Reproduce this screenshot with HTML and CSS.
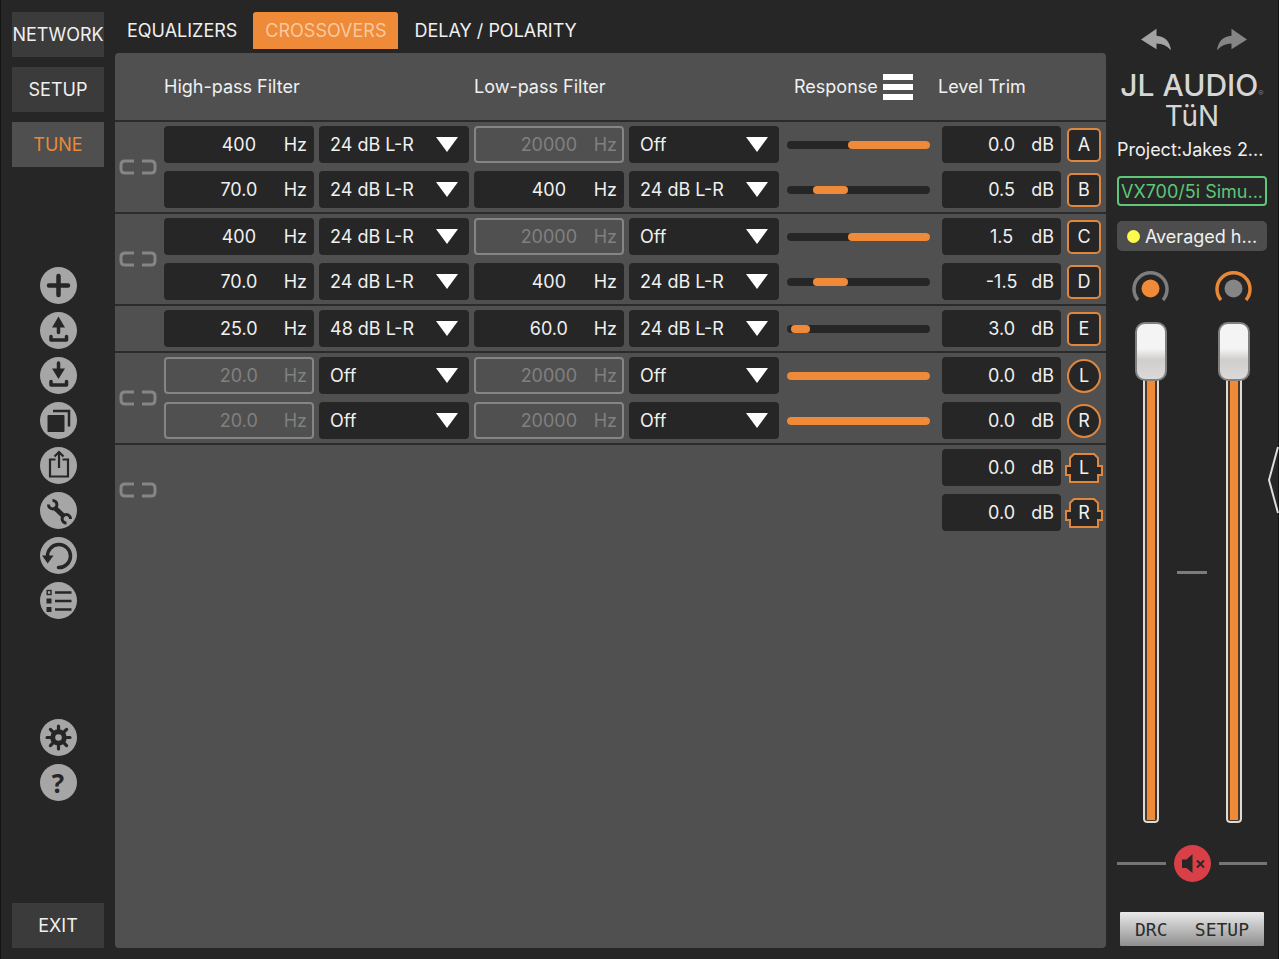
FILE: index.html
```html
<!DOCTYPE html>
<html lang="en">
<head>
    <meta charset="UTF-8">
    <meta name="viewport" content="width=device-width, initial-scale=1.0">
    <title>JL Audio TüN - Crossovers</title>
    <link rel="stylesheet" href="styles.css">
</head>
<body>
<svg class="defs" width="0" height="0" aria-hidden="true">
    <symbol id="link" viewBox="0 0 38 16">
        <path d="M15 2H6Q2 2 2 6V10Q2 14 6 14H15M23 2H32Q36 2 36 6V10Q36 14 32 14H23" fill="none" stroke="currentColor" stroke-width="3"/>
    </symbol>
    <symbol id="amp" viewBox="0 0 38 30">
        <path d="M9 1H29L33 5V13H37V22H33V29H5V22H1V13H5V5Z" fill="#262626" stroke="#e0873f" stroke-width="2"/>
    </symbol>
</svg>

<div class="app">
    <aside class="sidebar">
        <nav class="menu">
            <button type="button">NETWORK</button>
            <button type="button">SETUP</button>
            <button type="button" class="active">TUNE</button>
        </nav>

        <div class="tools">
            <button type="button" aria-label="Add">
                <svg viewBox="0 0 37 37"><path d="M18.500 9V28M9 18.500H28" fill="none" stroke="currentColor" stroke-width="4.500" stroke-linecap="round"/></svg>
            </button>
            <button type="button" aria-label="Upload">
                <svg viewBox="0 0 37 37"><path d="M18.500 4.500L25 15.500H12Z" fill="currentColor"/><path d="M18.500 13V20.500M11 24.500V28H26.500V24.500" fill="none" stroke="currentColor" stroke-width="3.500" stroke-linecap="round" stroke-linejoin="round"/></svg>
            </button>
            <button type="button" aria-label="Download">
                <svg viewBox="0 0 37 37"><path d="M18.500 22L25 11.500H12Z" fill="currentColor"/><path d="M18.500 6V13M11 24.500V28H26.500V24.500" fill="none" stroke="currentColor" stroke-width="3.500" stroke-linecap="round" stroke-linejoin="round"/></svg>
            </button>
            <button type="button" aria-label="Copy">
                <svg viewBox="0 0 37 37"><rect x="7.500" y="13" width="17" height="17" rx="1" fill="currentColor"/><path d="M13 9H29V24.500" fill="none" stroke="currentColor" stroke-width="2.500"/></svg>
            </button>
            <button type="button" aria-label="Share">
                <svg viewBox="0 0 37 37"><path d="M15.500 12.500H10V29.500H28V12.500H22.500M19 21V5.500M14.500 9.500L19 5L23.500 9.500" fill="none" stroke="currentColor" stroke-width="2.200"/></svg>
            </button>
            <button type="button" aria-label="Tools">
                <svg viewBox="0 0 37 37"><path d="M15.500 16.500L23.500 24" fill="none" stroke="currentColor" stroke-width="5"/><path d="M8.500 12.500A4.200 4.200 0 1 0 12.500 8.500M30.500 27A4.200 4.200 0 1 0 26.500 31" fill="none" stroke="currentColor" stroke-width="3"/></svg>
            </button>
            <button type="button" aria-label="Revert">
                <svg viewBox="0 0 37 37"><path d="M18.500 30.500A11.500 11.500 0 1 0 7.500 19.500" fill="none" stroke="currentColor" stroke-width="3.500" stroke-linecap="round"/><path d="M2 18.500H13.500L7.700 26.500Z" fill="currentColor"/></svg>
            </button>
            <button type="button" aria-label="List">
                <svg viewBox="0 0 37 37"><path d="M15 10.500H31.500M15 19H31.500M15 27.500H31.500" stroke="currentColor" stroke-width="2.400"/><rect x="7.200" y="8.500" width="3.800" height="4" fill="none" stroke="currentColor" stroke-width="1.400"/><rect x="6.500" y="16.500" width="5" height="5" fill="currentColor"/><rect x="6.500" y="25" width="5" height="5" fill="currentColor"/></svg>
            </button>
        </div>

        <div class="tools">
            <button type="button" aria-label="Settings">
                <svg viewBox="0 0 37 37">
                    <circle cx="18.500" cy="18.500" r="5.800" fill="none" stroke="currentColor" stroke-width="5"/>
                    <path d="M18.500 7V10M18.500 27V30M7 18.500H10M27 18.500H30M10.400 10.400L12.500 12.500M24.500 24.500L26.600 26.600M10.400 26.600L12.500 24.500M24.500 12.500L26.600 10.400" stroke="currentColor" stroke-width="3.200" stroke-linecap="round"/>
                </svg>
            </button>
            <button type="button" class="help" aria-label="Help">?</button>
        </div>

        <button type="button" class="exit">EXIT</button>
    </aside>

    <main class="main">
        <nav class="tabs">
            <button type="button">EQUALIZERS</button>
            <button type="button" class="active">CROSSOVERS</button>
            <button type="button">DELAY / POLARITY</button>
        </nav>

        <div class="panel">
            <div class="head">
                <span>High-pass Filter</span>
                <span>Low-pass Filter</span>
                <span class="response-head">Response
                    <button type="button" class="bars" aria-label="Response menu"><i></i><i></i><i></i></button>
                </span>
                <span>Level Trim</span>
            </div>

            <section class="group">
                <button type="button" class="link" aria-label="Link A and B"><svg><use href="#link"/></svg></button>
                <div class="rows">
                    <div class="row">
                        <label class="field"><input type="text" value="400" aria-label="A high-pass frequency"><span>Hz</span></label>
                        <div class="select"><select aria-label="A high-pass slope"><option>24 dB L-R</option><option>48 dB L-R</option><option>Off</option></select></div>
                        <label class="field disabled"><input type="text" value="20000" disabled aria-label="A low-pass frequency"><span>Hz</span></label>
                        <div class="select"><select aria-label="A low-pass slope"><option>Off</option><option>24 dB L-R</option><option>48 dB L-R</option></select></div>
                        <div class="response"><div class="band" style="margin-left: 43%; width: 57%"></div></div>
                        <label class="field level"><input type="text" value="0.0" aria-label="A level trim"><span>dB</span></label>
                        <div class="badge">A</div>
                    </div>
                    <div class="row">
                        <label class="field"><input type="text" value="70.0" aria-label="B high-pass frequency"><span>Hz</span></label>
                        <div class="select"><select aria-label="B high-pass slope"><option>24 dB L-R</option><option>48 dB L-R</option><option>Off</option></select></div>
                        <label class="field"><input type="text" value="400" aria-label="B low-pass frequency"><span>Hz</span></label>
                        <div class="select"><select aria-label="B low-pass slope"><option>24 dB L-R</option><option>48 dB L-R</option><option>Off</option></select></div>
                        <div class="response"><div class="band" style="margin-left: 18%; width: 25%"></div></div>
                        <label class="field level"><input type="text" value="0.5" aria-label="B level trim"><span>dB</span></label>
                        <div class="badge">B</div>
                    </div>
                </div>
            </section>

            <section class="group">
                <button type="button" class="link" aria-label="Link C and D"><svg><use href="#link"/></svg></button>
                <div class="rows">
                    <div class="row">
                        <label class="field"><input type="text" value="400" aria-label="C high-pass frequency"><span>Hz</span></label>
                        <div class="select"><select aria-label="C high-pass slope"><option>24 dB L-R</option><option>48 dB L-R</option><option>Off</option></select></div>
                        <label class="field disabled"><input type="text" value="20000" disabled aria-label="C low-pass frequency"><span>Hz</span></label>
                        <div class="select"><select aria-label="C low-pass slope"><option>Off</option><option>24 dB L-R</option><option>48 dB L-R</option></select></div>
                        <div class="response"><div class="band" style="margin-left: 43%; width: 57%"></div></div>
                        <label class="field level"><input type="text" value="1.5" aria-label="C level trim"><span>dB</span></label>
                        <div class="badge">C</div>
                    </div>
                    <div class="row">
                        <label class="field"><input type="text" value="70.0" aria-label="D high-pass frequency"><span>Hz</span></label>
                        <div class="select"><select aria-label="D high-pass slope"><option>24 dB L-R</option><option>48 dB L-R</option><option>Off</option></select></div>
                        <label class="field"><input type="text" value="400" aria-label="D low-pass frequency"><span>Hz</span></label>
                        <div class="select"><select aria-label="D low-pass slope"><option>24 dB L-R</option><option>48 dB L-R</option><option>Off</option></select></div>
                        <div class="response"><div class="band" style="margin-left: 18%; width: 25%"></div></div>
                        <label class="field level"><input type="text" value="-1.5" aria-label="D level trim"><span>dB</span></label>
                        <div class="badge">D</div>
                    </div>
                </div>
            </section>

            <section class="group">
                <div class="link"></div>
                <div class="rows">
                    <div class="row">
                        <label class="field"><input type="text" value="25.0" aria-label="E high-pass frequency"><span>Hz</span></label>
                        <div class="select"><select aria-label="E high-pass slope"><option>48 dB L-R</option><option>24 dB L-R</option><option>Off</option></select></div>
                        <label class="field"><input type="text" value="60.0" aria-label="E low-pass frequency"><span>Hz</span></label>
                        <div class="select"><select aria-label="E low-pass slope"><option>24 dB L-R</option><option>48 dB L-R</option><option>Off</option></select></div>
                        <div class="response"><div class="band" style="margin-left: 3%; width: 13%"></div></div>
                        <label class="field level"><input type="text" value="3.0" aria-label="E level trim"><span>dB</span></label>
                        <div class="badge">E</div>
                    </div>
                </div>
            </section>

            <section class="group">
                <button type="button" class="link" aria-label="Link left and right"><svg><use href="#link"/></svg></button>
                <div class="rows">
                    <div class="row">
                        <label class="field disabled"><input type="text" value="20.0" disabled aria-label="L high-pass frequency"><span>Hz</span></label>
                        <div class="select"><select aria-label="L high-pass slope"><option>Off</option><option>24 dB L-R</option><option>48 dB L-R</option></select></div>
                        <label class="field disabled"><input type="text" value="20000" disabled aria-label="L low-pass frequency"><span>Hz</span></label>
                        <div class="select"><select aria-label="L low-pass slope"><option>Off</option><option>24 dB L-R</option><option>48 dB L-R</option></select></div>
                        <div class="response"><div class="band" style="margin-left: 0%; width: 100%"></div></div>
                        <label class="field level"><input type="text" value="0.0" aria-label="L level trim"><span>dB</span></label>
                        <div class="badge round">L</div>
                    </div>
                    <div class="row">
                        <label class="field disabled"><input type="text" value="20.0" disabled aria-label="R high-pass frequency"><span>Hz</span></label>
                        <div class="select"><select aria-label="R high-pass slope"><option>Off</option><option>24 dB L-R</option><option>48 dB L-R</option></select></div>
                        <label class="field disabled"><input type="text" value="20000" disabled aria-label="R low-pass frequency"><span>Hz</span></label>
                        <div class="select"><select aria-label="R low-pass slope"><option>Off</option><option>24 dB L-R</option><option>48 dB L-R</option></select></div>
                        <div class="response"><div class="band" style="margin-left: 0%; width: 100%"></div></div>
                        <label class="field level"><input type="text" value="0.0" aria-label="R level trim"><span>dB</span></label>
                        <div class="badge round">R</div>
                    </div>
                </div>
            </section>

            <section class="group">
                <button type="button" class="link" aria-label="Link outputs"><svg><use href="#link"/></svg></button>
                <div class="rows">
                    <div class="row">
                        <label class="field level"><input type="text" value="0.0" aria-label="Output L level trim"><span>dB</span></label>
                        <div class="badge amp"><svg><use href="#amp"/></svg><span>L</span></div>
                    </div>
                    <div class="row">
                        <label class="field level"><input type="text" value="0.0" aria-label="Output R level trim"><span>dB</span></label>
                        <div class="badge amp"><svg><use href="#amp"/></svg><span>R</span></div>
                    </div>
                </div>
            </section>
        </div>
    </main>

    <aside class="master">
        <div class="history">
            <button type="button" aria-label="Undo">
                <svg viewBox="0 0 32 24"><path d="M0 12L16 1V8Q29 9 31 23Q25 16 16 16V22Z" fill="#a3a3a3"/></svg>
            </button>
            <button type="button" aria-label="Redo">
                <svg viewBox="0 0 32 24"><path d="M32 12L16 1V8Q3 9 1 23Q7 16 16 16V22Z" fill="#858585"/></svg>
            </button>
        </div>

        <div class="logo">
            <div class="brand">JL AUDIO<small>®</small></div>
            <div class="product">TüN</div>
        </div>

        <div class="project">Project:Jakes 2...</div>
        <button type="button" class="device">VX700/5i Simu...</button>
        <button type="button" class="preset"><i></i>Averaged h...</button>

        <div class="faders">
            <button type="button" class="knob" aria-label="Master level">
                <svg viewBox="0 0 37 32"><path d="M6 30A16.500 16.500 0 1 1 31 30" fill="none" stroke="#7e7e7e" stroke-width="3.500"/><circle cx="18.500" cy="18.500" r="9" fill="#ee8a38"/></svg>
            </button>
            <span></span>
            <button type="button" class="knob" aria-label="Subwoofer level">
                <svg viewBox="0 0 37 32"><path d="M6 30A16.500 16.500 0 1 1 31 30" fill="none" stroke="#e88736" stroke-width="3.500"/><circle cx="18.500" cy="18.500" r="9" fill="#858585"/></svg>
            </button>
            <input type="range" class="fader" min="0" max="100" value="100" aria-label="Master volume">
            <span class="dash"></span>
            <input type="range" class="fader" min="0" max="100" value="100" aria-label="Subwoofer volume">
        </div>

        <div class="mute-row">
            <button type="button" class="mute" aria-label="Mute">
                <svg viewBox="0 0 37 37"><path d="M8 14.500H12.500L18.500 9V28L12.500 23H8Z" fill="currentColor"/><path d="M23 15.500L30 22.500M30 15.500L23 22.500" stroke="currentColor" stroke-width="1.800"/></svg>
            </button>
        </div>

        <button type="button" class="drc"><span>DRC</span><span>SETUP</span></button>
    </aside>

    <button type="button" class="drawer" aria-label="Open drawer">
        <svg viewBox="0 0 12 68"><path d="M11 1L2 34L11 67" fill="none" stroke="#dcdcdc" stroke-width="2"/></svg>
    </button>
</div>
</body>
</html>
```
FILE: styles.css
```css
* {
    box-sizing: border-box;
}
body {
    margin: 0;
    background: #262626;
    color: #f0f0f0;
    font-family: Inter, "Liberation Sans", sans-serif;
    font-size: 18px;
}
button, input, select {
    margin: 0;
    padding: 0;
    border: none;
    background: none;
    color: inherit;
    font: inherit;
}
button {
    cursor: pointer;
    white-space: nowrap;
}
svg {
    display: block;
}
.defs {
    position: absolute;
}
.app {
    position: relative;
    display: grid;
    grid-template-columns: 92px 1fr 150px;
    gap: 11px;
    min-height: 100vh;
    padding: 12px 11px 11px;
    border: solid #141414;
    border-width: 0 1px;
}

/* left sidebar */
.sidebar {
    display: flex;
    flex-direction: column;
    align-items: center;
    gap: 100px;
}
.menu {
    display: flex;
    flex-direction: column;
    gap: 10px;
    width: 100%;
}
.menu button, .exit {
    width: 100%;
    height: 45px;
    background: #3b3b3b;
}
.menu .active {
    background: #4f4f4f;
    color: #ea8838;
}
.tools {
    display: flex;
    flex-direction: column;
    gap: 8px;
}
.tools button {
    width: 37px;
    height: 37px;
    border-radius: 50%;
    background: #a6a6a6;
    color: #262626;
}
.tools .help {
    font: bold 26px "Open Sans", sans-serif;
}
.exit {
    margin-top: auto;
}

/* tabs and panel */
.main {
    display: flex;
    flex-direction: column;
    gap: 4px;
    min-width: 0;
}
.tabs {
    display: flex;
    gap: 4px;
}
.tabs button {
    height: 37px;
    padding: 0 12px;
    border-radius: 3px 3px 0 0;
}
.tabs .active {
    background: #ee8a38;
    color: #f8c9a0;
}
.panel {
    flex: 1;
    border-radius: 4px;
    background: #505050;
}
.head {
    display: grid;
    grid-template-columns: 305fr 305fr 149fr 164fr;
    gap: 5px;
    align-items: center;
    height: 69px;
    padding: 0 4px 0 49px;
    border-bottom: 2px solid #2b2b2b;
}
.response-head {
    display: flex;
    align-items: center;
    gap: 5px;
    padding-left: 10px;
}
.bars {
    display: grid;
    gap: 4px;
    width: 30px;
}
.bars i {
    height: 6px;
    background: #fff;
}

/* channel groups */
.group {
    display: flex;
    padding: 4px 4px 4px 0;
    border-bottom: 2px solid #2b2b2b;
}
.group:last-child {
    border-bottom: none;
}
.link {
    display: grid;
    place-items: center;
    width: 45px;
    margin-right: 4px;
    color: #868686;
}
.link svg {
    width: 38px;
    height: 16px;
}
.rows {
    flex: 1;
    display: grid;
    gap: 8px;
}
.row {
    display: grid;
    grid-template-columns: repeat(4, 150fr) 153fr 119fr 36px;
    gap: 5px;
    align-items: center;
    height: 37px;
}
.field {
    display: flex;
    align-items: center;
    height: 37px;
    padding: 0 7px 0 30px;
    border-radius: 4px;
    background: #262626;
}
.field input {
    flex: 1;
    width: 0;
    min-width: 0;
    text-align: center;
}
.field.level {
    grid-column: 6;
}
.field.disabled {
    padding: 0 5px 0 28px;
    border: 2px solid #858585;
    background: none;
    color: #808080;
}
.select {
    display: grid;
    align-items: center;
    height: 37px;
    border-radius: 4px;
    background: #262626;
}
.select select {
    grid-area: 1 / 1;
    height: 37px;
    padding-left: 11px;
    appearance: none;
}
.select option {
    background: #262626;
}
.select::after {
    content: "";
    grid-area: 1 / 1;
    justify-self: end;
    width: 22px;
    height: 15px;
    margin-right: 11px;
    background: #fff;
    clip-path: polygon(0 0, 100% 0, 50% 100%);
    pointer-events: none;
}
.response {
    height: 8px;
    margin: 0 7px 0 3px;
    border-radius: 4px;
    background: #262626;
}
.band {
    height: 8px;
    border-radius: 4px;
    background: #ee8a38;
}
.badge {
    grid-column: 7;
    display: grid;
    place-items: center;
    justify-self: center;
    width: 34px;
    height: 34px;
    border: 2px solid #e0873f;
    border-radius: 5px;
    background: #262626;
}
.badge.round {
    border-radius: 50%;
}
.badge.amp {
    width: 38px;
    border: none;
    background: none;
}
.amp svg, .amp span {
    grid-area: 1 / 1;
}
.amp svg {
    width: 38px;
    height: 30px;
}

/* master section */
.master {
    display: flex;
    flex-direction: column;
    padding: 15px 0 2px;
}
.history {
    display: flex;
    justify-content: space-between;
    padding: 0 20px 0 24px;
}
.history svg {
    width: 31px;
    height: 25px;
}
.logo {
    margin-top: 18px;
    color: #d6d6d6;
    text-align: center;
    white-space: nowrap;
}
.brand {
    display: flex;
    align-items: flex-end;
    justify-content: center;
    font-size: 30px;
    font-weight: 500;
    line-height: 30px;
}
.brand small {
    color: #777;
    font-size: 8px;
    line-height: 14px;
}
.product {
    font-size: 28px;
    line-height: 32px;
}
.project {
    margin-top: 6px;
    line-height: 24px;
    white-space: nowrap;
}
.device {
    height: 30px;
    margin-top: 14px;
    border: 2px solid #5cc878;
    border-radius: 4px;
    color: #5cc878;
}
.preset {
    display: flex;
    align-items: center;
    justify-content: center;
    gap: 5px;
    height: 30px;
    margin-top: 15px;
    border-radius: 5px;
    background: #4d4d4d;
}
.preset i {
    width: 13px;
    height: 13px;
    border-radius: 50%;
    background: #fdfb4b;
}
.faders {
    flex: 1;
    display: grid;
    grid-template-columns: 37px 1fr 37px;
    grid-template-rows: 32px 1fr;
    gap: 20px 0;
    place-items: center;
    margin-top: 19px;
    padding: 0 15px;
}
.knob svg {
    width: 37px;
    height: 32px;
}
.fader {
    writing-mode: vertical-lr;
    direction: rtl;
    appearance: none;
    width: 32px;
    height: 100%;
}
.fader::-webkit-slider-runnable-track {
    width: 16px;
    height: 100%;
    border-radius: 4px;
    background: linear-gradient(#ee8a38, #ee8a38) center / 8px calc(100% - 6px) no-repeat #4a3a2c;
    box-shadow: inset 0 0 0 2px #dedad6;
}
.fader::-webkit-slider-thumb {
    appearance: none;
    width: 32px;
    height: 59px;
    margin-left: -8px;
    border: 2px solid #808080;
    border-radius: 10px;
    background: linear-gradient(#f4f4f4 45%, #cfcecd 65%, #dcdad8);
}
.dash {
    width: 30px;
    height: 3px;
    background: #7c7c7c;
}
.mute-row {
    display: flex;
    align-items: center;
    gap: 8px;
    margin-top: 22px;
}
.mute-row::before, .mute-row::after {
    content: "";
    flex: 1;
    height: 3px;
    background: #757575;
}
.mute {
    width: 37px;
    height: 37px;
    border-radius: 50%;
    background: #d93f47;
    color: #262626;
}
.drc {
    display: flex;
    align-items: center;
    justify-content: space-between;
    height: 34px;
    margin: 30px 3px 0;
    padding: 0 15px;
    border-radius: 1px;
    background: linear-gradient(#e9e9e9, #8f8f8f);
    color: #2c2c2c;
    font: 18px "DejaVu Sans Mono", monospace;
}

/* drawer handle over the right edge */
.drawer {
    position: absolute;
    top: 50%;
    right: -1px;
    width: 12px;
    height: 68px;
    transform: translateY(-50%);
}
```
